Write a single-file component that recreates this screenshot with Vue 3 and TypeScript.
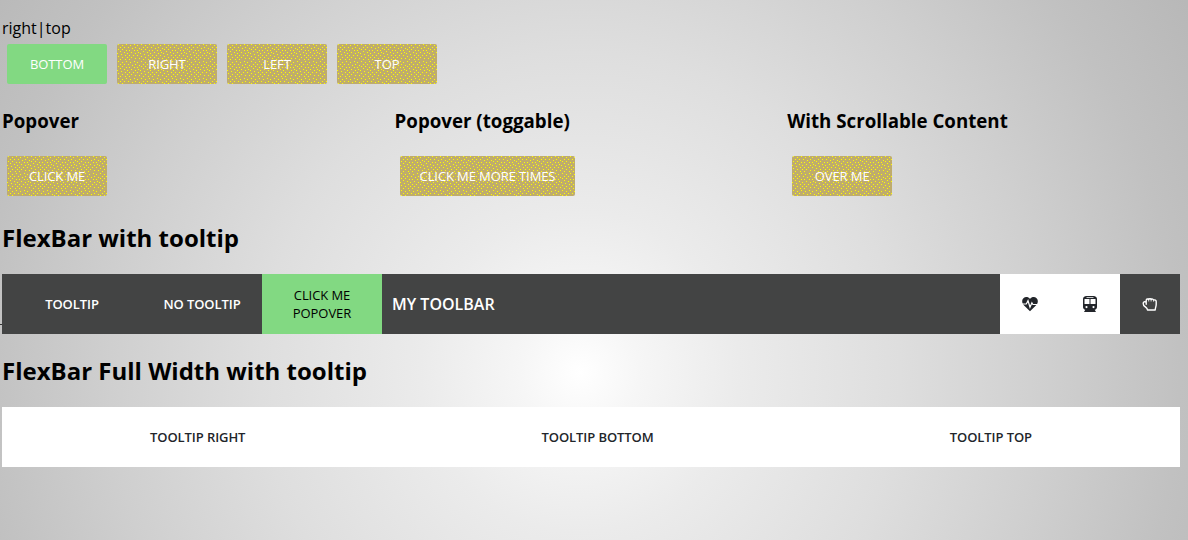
<script setup lang="ts">
interface Item {
  label: string
  active?: boolean
}

const positions: Item[] = [
  { label: 'BOTTOM', active: true },
  { label: 'RIGHT' },
  { label: 'LEFT' },
  { label: 'TOP' },
]

const samples = [
  { title: 'Popover', action: 'CLICK ME' },
  { title: 'Popover (toggable)', action: 'CLICK ME MORE TIMES' },
  { title: 'With Scrollable Content', action: 'OVER ME' },
]

const tooltips = ['TOOLTIP RIGHT', 'TOOLTIP BOTTOM', 'TOOLTIP TOP']
</script>

<template>
  <main class="page">
    <div class="current">right|top</div>
    <div class="positions">
      <button v-for="p in positions" :key="p.label" class="btn" :class="{ active: p.active }">{{ p.label }}</button>
    </div>

    <div class="samples">
      <section v-for="s in samples" :key="s.title">
        <h3>{{ s.title }}</h3>
        <button class="btn">{{ s.action }}</button>
      </section>
    </div>

    <h2>FlexBar with tooltip</h2>
    <nav class="bar dark">
      <div class="cell first">TOOLTIP</div>
      <div class="cell second">NO TOOLTIP</div>
      <div class="cell popover">CLICK ME POPOVER</div>
      <div class="title">MY TOOLBAR</div>
      <div class="cell icon light">
        <svg width="16" height="16" viewBox="0 0 16 16">
          <path fill="#22252a" d="M8 15.200 1.600 8.900C-.3 6.900-.2 3.700 1.400 2.200 3.400.4 6.400.8 8 3 9.600.8 12.600.4 14.600 2.200c1.600 1.500 1.700 4.700-.2 6.700z" />
          <path fill="none" stroke="#fff" stroke-width="1.2" d="M0 8h4.300l1.700-3.300L8 11.200l1.900-4.400 1 1.700H16" />
        </svg>
      </div>
      <div class="cell icon light">
        <svg width="16" height="16" viewBox="0 0 16 16">
          <path fill="#22252a" fill-rule="evenodd" d="M4.500 0h7C13.700.2 15 1.300 15 3v8c0 1.500-.9 2.500-2.300 2.700L14 16H2l1.300-2.300C1.900 13.500 1 12.500 1 11V3C1 1.300 2.300.2 4.500 0zM4.500 1.200v.8h7v-.8zM2.500 3v5h5V3zm6 0v5h5V3zM4.500 10a1.100 1.100 0 1 0 0 2.200 1.100 1.100 0 0 0 0-2.200zm7 0a1.100 1.100 0 1 0 0 2.200 1.100 1.100 0 0 0 0-2.200z" />
        </svg>
      </div>
      <div class="cell icon">
        <svg width="16" height="16" viewBox="0 0 16 16">
          <path fill="none" stroke="#fff" stroke-width="1.4" stroke-linejoin="round" stroke-linecap="round" d="M4.200 8.300V4.400c0-1.500 1.700-1.900 2.500-.9.500-1 2-1 2.400 0 .8-.8 2.200-.5 2.500.5 1.300-.5 2.600.2 2.600 1.600v2.600c0 2.200-.9 3.500-1 5.800H5.500c-.1-1.800-1.300-2.500-2.500-3.400-1.200-.9-1.800-1.900-1.800-3.200 0-1.500 1.500-2.100 3-1.300" />
          <path fill="none" stroke="#fff" stroke-width=".8" d="M6.700 3.800v1.700M9.100 3.800v1.700M11.600 4.200v1.500" />
        </svg>
      </div>
      <i class="speck" />
    </nav>

    <h2 class="full">FlexBar Full Width with tooltip</h2>
    <nav class="bar white">
      <div v-for="t in tooltips" :key="t" class="wide">{{ t }}</div>
    </nav>
  </main>
</template>

<style>
body {
  overflow: hidden;
}
</style>

<style scoped>
.page {
  box-sizing: border-box;
  width: 1188px;
  height: 540px;
  padding: 17px 8px 0 2px;
  font-family: "Open Sans", sans-serif;
  font-size: 16px;
  color: #000;
  background: radial-gradient(circle at 580px 372px, #fff 0, #f6f6f6 60px, #ebebeb 160px, #dedede 320px, #cfcfcf 470px, #c1c1c1 600px, #b8b8b8 710px);
}
.current {
  height: 22px;
  line-height: 22px;
}
.positions {
  display: flex;
  gap: 10px;
  padding: 5px;
}
.btn {
  display: block;
  min-width: 100px;
  height: 40px;
  padding: 0 20px;
  border: 0;
  border-radius: 2px;
  font: 13px/40px "Open Sans", sans-serif;
  letter-spacing: -0.1px;
  color: #fff;
  background-color: #bfac6c;
  background-image: url("data:image/svg+xml,%3Csvg xmlns='http://www.w3.org/2000/svg' width='23' height='17' shape-rendering='crispEdges'%3E%3Cpath fill='%23ff0' d='M1 0h1v1h-1zM5 1h1v1h-1zM9 0h1v1h-1zM13 1h1v1h-1zM17 0h1v1h-1zM20 1h1v1h-1zM3 3h1v1h-1zM7 3h1v1h-1zM11 3h1v1h-1zM15 4h1v1h-1zM18 3h1v1h-1zM22 4h1v1h-1zM1 5h1v1h-1zM5 5h1v1h-1zM9 6h1v1h-1zM12 6h1v1h-1zM17 6h1v1h-1zM20 6h1v1h-1zM3 7h1v1h-1zM7 8h1v1h-1zM14 8h1v1h-1zM0 9h1v1h-1zM10 9h1v1h-1zM18 9h1v1h-1zM21 8h1v1h-1zM4 10h1v1h-1zM12 11h1v1h-1zM16 11h1v1h-1zM8 11h1v1h-1zM1 12h1v1h-1zM20 11h1v1h-1zM5 13h1v1h-1zM10 13h1v1h-1zM14 13h1v1h-1zM18 14h1v1h-1zM22 14h1v1h-1zM8 15h1v1h-1zM3 15h1v1h-1zM12 15h1v1h-1z'/%3E%3C/svg%3E");
}
.btn.active {
  background: #82d982;
}
.samples {
  display: grid;
  grid-template-columns: repeat(3, 392.600px);
  margin-top: 18px;
}
h3 {
  margin: 0 0 21px;
  font-size: 18.720px;
  line-height: 28px;
  font-weight: 700;
}
.samples .btn {
  margin-left: 5px;
}
h2 {
  margin: 24px 0 19px;
  font-size: 24px;
  line-height: 35px;
  font-weight: 700;
}
h2.full {
  margin: 19px 0;
}
.bar {
  position: relative;
  display: flex;
  width: 1178px;
  height: 60px;
}
.dark {
  color: #fff;
  background: #434444;
}
.speck {
  position: absolute;
  left: -2px;
  top: 50px;
  width: 2px;
  height: 1px;
  background: #333;
}
.cell {
  display: flex;
  align-items: center;
  justify-content: center;
  font-size: 13px;
  font-weight: 600;
  letter-spacing: -0.08px;
}
.first {
  width: 140px;
}
.second {
  width: 120px;
}
.popover {
  box-sizing: border-box;
  width: 120px;
  padding: 0 25px;
  line-height: 18px;
  font-weight: 400;
  text-align: center;
  color: #000;
  background: #82d982;
}
.title {
  flex: 1;
  padding-left: 10px;
  line-height: 60px;
  font-weight: 600;
}
.icon {
  width: 60px;
}
.light {
  background: #fff;
}
.white {
  color: #22252a;
  background: #fff;
}
.wide {
  flex: 1 1 auto;
  text-align: center;
  font-size: 13px;
  line-height: 60px;
  font-weight: 600;
  letter-spacing: -0.08px;
}
</style>
